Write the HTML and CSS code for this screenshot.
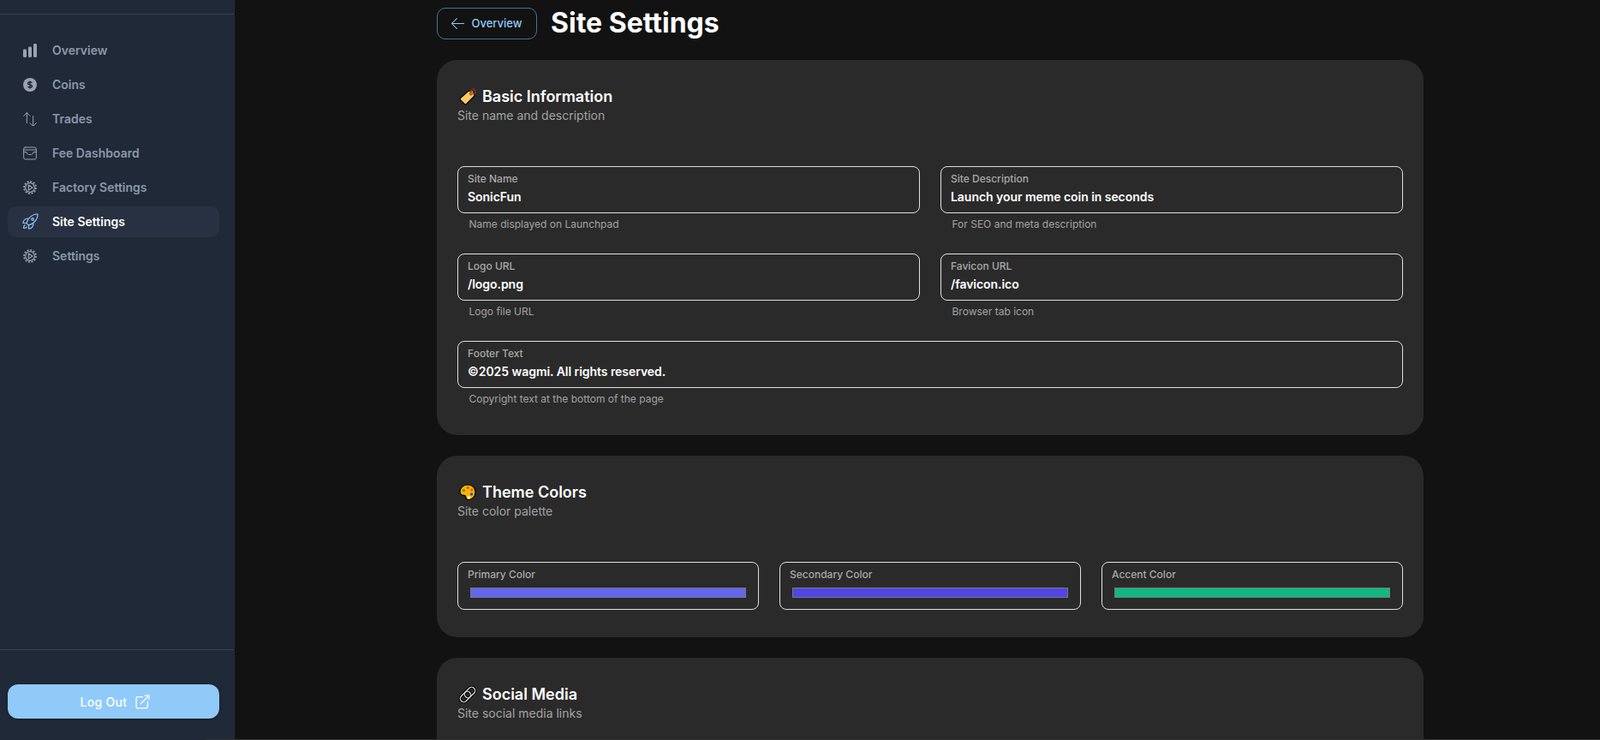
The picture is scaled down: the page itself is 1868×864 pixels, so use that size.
FILE: index.html
```html
<!DOCTYPE html>
<html lang="en">
<head>
    <meta charset="UTF-8">
    <meta name="viewport" content="width=device-width, initial-scale=1.0">
    <title>Site Settings</title>
    <link rel="stylesheet" href="styles.css">
</head>
<body>
    <aside class="sidebar">
        <div class="sidebar-top"></div>
        <nav class="nav">
            <a class="nav-item" href="#">
                <svg class="nav-icon" viewBox="0 0 16 16" fill="currentColor"><rect x="0" y="6.5" width="4" height="9.5" rx="1.4"/><rect x="6" y="3.5" width="4" height="12.5" rx="1.4"/><rect x="12" y="0" width="4" height="16" rx="1.4"/></svg>
                Overview
            </a>
            <a class="nav-item" href="#">
                <svg class="nav-icon" viewBox="0 0 16 16"><circle cx="8" cy="8" r="8" fill="currentColor"/><path d="M10.4 5.7C10 5 9 4.7 8 4.7c-1.3 0-2.4.6-2.4 1.7 0 2.3 4.9 1 4.9 3.2 0 1.1-1.1 1.7-2.5 1.7-1.1 0-2-.4-2.5-1.1M8 3.4v9.2" fill="none" stroke="#1f2937" stroke-width="1.4"/></svg>
                Coins
            </a>
            <a class="nav-item" href="#">
                <svg class="nav-icon" viewBox="0 0 24 24" fill="none" stroke="currentColor" stroke-width="1.5" stroke-linecap="round" stroke-linejoin="round"><path d="M1 6.5 6.5 1m0 0L12 6.5M6.5 1v18m16.5 0L17.5 24.500m0 0L12 19m5.500 5.500V7"/></svg>
                Trades
            </a>
            <a class="nav-item" href="#">
                <svg class="nav-icon" viewBox="0 0 24 24" fill="none" stroke="currentColor" stroke-width="1.5" stroke-linecap="round" stroke-linejoin="round"><rect x="1" y="1.500" width="22" height="21" rx="3"/><path d="M1 6h22M1 10h5c.500 3 2.500 4.500 6 4.500s5.500-1.500 6-4.500h5"/></svg>
                Fee Dashboard
            </a>
            <a class="nav-item" href="#">
                <svg class="nav-icon" viewBox="0 0 24 24" fill="none" stroke="currentColor" stroke-linejoin="round"><circle cx="12" cy="12" r="10.500" stroke-width="2.600" stroke-dasharray="3 2.500"/><circle cx="12" cy="12" r="8" stroke-width="1.800"/><path d="M9.500 7.500 16.500 12l-7 4.500Z" stroke-width="1.800"/></svg>
                Factory Settings
            </a>
            <a class="nav-item nav-item-active" href="#">
                <svg class="nav-icon nav-icon-rocket" viewBox="0 0 24 24" fill="none" stroke="currentColor" stroke-width="1.3" stroke-linecap="round" stroke-linejoin="round"><path d="M15.59 14.37a6 6 0 0 1-5.84 7.38v-4.8m5.84-2.58a14.98 14.98 0 0 0 6.16-12.12A14.98 14.98 0 0 0 9.631 8.41m5.96 5.96a14.926 14.926 0 0 1-5.841 2.58m-.119-8.54a6 6 0 0 0-7.381 5.84h4.8m2.581-5.84a14.927 14.927 0 0 0-2.58 5.84m2.699 2.7c-.103.021-.207.041-.311.06a15.09 15.09 0 0 1-2.448-2.448 14.9 14.9 0 0 1 .06-.312m-2.24 2.39a4.493 4.493 0 0 0-1.757 4.306 4.493 4.493 0 0 0 4.306-1.758M16.5 9a1.5 1.5 0 1 1-3 0 1.5 1.5 0 0 1 3 0Z"/></svg>
                Site Settings
            </a>
            <a class="nav-item" href="#">
                <svg class="nav-icon" viewBox="0 0 24 24" fill="none" stroke="currentColor" stroke-linejoin="round"><circle cx="12" cy="12" r="10.500" stroke-width="2.600" stroke-dasharray="3 2.500"/><circle cx="12" cy="12" r="8" stroke-width="1.800"/><path d="M9.500 7.500 16.500 12l-7 4.500Z" stroke-width="1.800"/></svg>
                Settings
            </a>
        </nav>
        <div class="sidebar-footer">
            <button class="logout" type="button">
                Log Out
                <svg class="logout-icon" viewBox="0 0 16 16" fill="none" stroke="currentColor" stroke-width="1.200" stroke-linecap="round" stroke-linejoin="round"><path d="M8 2.500H2.500A1.500 1.500 0 0 0 1 4v9.500A1.500 1.500 0 0 0 2.500 15H12a1.500 1.500 0 0 0 1.500-1.500V8M6 10 15 1m0 0h-4.500M15 1v4.500"/></svg>
            </button>
        </div>
    </aside>

    <main class="main">
        <header class="page-head">
            <a class="back-link" href="#">
                <svg class="back-icon" viewBox="0 0 24 24" fill="none" stroke="currentColor" stroke-width="1.300" stroke-linecap="round" stroke-linejoin="round"><path d="M10.500 19.500 3 12m0 0 7.500-7.500M3 12h18"/></svg>
                Overview
            </a>
            <h1>Site Settings</h1>
        </header>

        <section class="card">
            <h2 class="card-title">
                <svg class="emoji" viewBox="0 0 20 20"><path d="M10.500 3.500 16.500 2.500 18 9 8.500 18.500a1.500 1.500 0 0 1-2.100 0L1.500 13.600a1.500 1.500 0 0 1 0-2.100Z" fill="#ffc966" stroke="#000" stroke-width="1.200"/><path d="M14 6.500C13.500 3 15 .8 17 1.200c1.800.400 2.300 3 1 6" fill="none" stroke="#a8311c" stroke-width="1.300"/><circle cx="14" cy="6.300" r="1.800" fill="#d9730d" stroke="#7a3a10" stroke-width=".8"/></svg>
                Basic Information
            </h2>
            <p class="card-sub">Site name and description</p>
            <div class="grid grid-2">
                <div>
                    <label class="field">
                        <span class="field-label">Site Name</span>
                        <input class="field-input" type="text" value="SonicFun">
                    </label>
                    <p class="helper">Name displayed on Launchpad</p>
                </div>
                <div>
                    <label class="field">
                        <span class="field-label">Site Description</span>
                        <input class="field-input" type="text" value="Launch your meme coin in seconds">
                    </label>
                    <p class="helper">For SEO and meta description</p>
                </div>
                <div>
                    <label class="field">
                        <span class="field-label">Logo URL</span>
                        <input class="field-input" type="text" value="/logo.png">
                    </label>
                    <p class="helper">Logo file URL</p>
                </div>
                <div>
                    <label class="field">
                        <span class="field-label">Favicon URL</span>
                        <input class="field-input" type="text" value="/favicon.ico">
                    </label>
                    <p class="helper">Browser tab icon</p>
                </div>
                <div class="span-2">
                    <label class="field">
                        <span class="field-label">Footer Text</span>
                        <input class="field-input" type="text" value="©2025 wagmi. All rights reserved.">
                    </label>
                    <p class="helper">Copyright text at the bottom of the page</p>
                </div>
            </div>
        </section>

        <section class="card">
            <h2 class="card-title">
                <svg class="emoji" viewBox="0 0 20 20"><path d="M10 1C4.800 1 1 4.600 1 9c0 3 2.200 4.500 4.300 4.300 1.500-.100 2.400.500 2.400 1.800 0 1.700 1 3.400 3.300 3.400 4.600 0 8-4 8-9S15.200 1 10 1Z" fill="#ffb300" stroke="#000" stroke-width="1.200"/><circle cx="5.500" cy="7.500" r="1.600" fill="#3c9a2e"/><circle cx="10.200" cy="4.500" r="1.500" fill="#e2492b"/><circle cx="14.800" cy="7" r="1.400" fill="#e2492b"/><circle cx="14.500" cy="12" r="1.800" fill="#1c5fd6"/><circle cx="11.500" cy="15.800" r="1.500" fill="#fff"/></svg>
                Theme Colors
            </h2>
            <p class="card-sub">Site color palette</p>
            <div class="grid grid-3">
                <label class="field">
                    <span class="field-label">Primary Color</span>
                    <input class="color-input" type="color" value="#6366f1">
                </label>
                <label class="field">
                    <span class="field-label">Secondary Color</span>
                    <input class="color-input" type="color" value="#4f46e5">
                </label>
                <label class="field">
                    <span class="field-label">Accent Color</span>
                    <input class="color-input" type="color" value="#10b981">
                </label>
            </div>
        </section>

        <section class="card">
            <h2 class="card-title">
                <svg class="emoji" viewBox="0 0 20 20" fill="none"><g stroke="#000" stroke-width="3.400"><rect x="3.500" y="5.500" width="8" height="14" rx="4" transform="rotate(45 7.500 12.500)"/><rect x="8.500" y=".5" width="8" height="14" rx="4" transform="rotate(45 12.500 7.500)"/></g><g stroke="#d8d8d8" stroke-width="1.300"><rect x="3.500" y="5.500" width="8" height="14" rx="4" transform="rotate(45 7.500 12.500)"/><rect x="8.500" y=".5" width="8" height="14" rx="4" transform="rotate(45 12.500 7.500)"/></g></svg>
                Social Media
            </h2>
            <p class="card-sub">Site social media links</p>
        </section>
    </main>
    <div class="page-edge"></div>
</body>
</html>
```

FILE: styles.css
```css
* {
    box-sizing: border-box;
}
html, body {
    height: 100%;
}
body {
    margin: 0;
    display: flex;
    height: 864px;
    overflow: hidden;
    font-family: Inter, "Noto Sans", sans-serif;
    background-color: #121212;
    color: white;
}

/* sidebar */
.sidebar {
    width: 274px;
    flex-shrink: 0;
    display: flex;
    flex-direction: column;
    background: #1f2937;
    border-right: 1px solid #2b2b2b;
}
.sidebar-top {
    height: 17px;
    border-bottom: 1px solid #374151;
}
.nav {
    flex: 1;
    display: flex;
    flex-direction: column;
    gap: 4px;
    padding: 24px 17px 0 9px;
}
.nav-item {
    display: flex;
    align-items: center;
    gap: 18px;
    height: 36px;
    padding: 0 0 1px 18px;
    border-radius: 10px;
    font-size: 14px;
    font-weight: 600;
    color: #8b98a9;
    text-decoration: none;
}
.nav-icon {
    width: 16px;
    height: 16px;
    flex-shrink: 0;
    color: #9ca3af;
}
.nav-item-active {
    background: #283141;
    color: white;
}
.nav-item-active .nav-icon {
    color: #90caf9;
}
.nav-icon-rocket {
    width: 21px;
    height: 21px;
    margin: 0 -2.5px;
}
.sidebar-footer {
    height: 106px;
    padding: 40px 17px 0 9px;
    border-top: 1px solid #374151;
}
.logout {
    display: flex;
    align-items: center;
    justify-content: center;
    gap: 10px;
    width: 100%;
    height: 40px;
    padding-left: 10px;
    border: none;
    border-radius: 12px;
    background: #90caf9;
    box-shadow: 0 1px 3px rgba(0,0,0,0.3);
    color: white;
    font-family: inherit;
    font-size: 14px;
    font-weight: 500;
    letter-spacing: 0.3px;
}
.logout-icon {
    width: 17px;
    height: 17px;
}

/* main column */
.main {
    flex: 1;
    min-width: 0;
    padding: 9px 0 0 236px;
}
.page-head {
    display: flex;
    align-items: center;
    gap: 16px;
    height: 37px;
    margin-bottom: 24px;
}
.page-head h1 {
    margin: 0 0 2px;
    font-size: 32px;
    line-height: 36px;
    font-weight: 700;
}
.back-link {
    display: flex;
    align-items: center;
    gap: 7px;
    width: 117px;
    height: 37px;
    padding: 0 0 1px 13.5px;
    border: 1px solid #4a7290;
    border-radius: 10px;
    color: #90caf9;
    font-size: 13px;
    font-weight: 500;
    text-decoration: none;
}
.back-icon {
    width: 19px;
    height: 19px;
}
.card {
    width: 1152px;
    margin-bottom: 24px;
    padding: 29px 24px 32px;
    background: #2a2a2a;
    border-radius: 24px;
}
.card-title {
    display: flex;
    align-items: center;
    gap: 7px;
    margin: 0;
    font-size: 18px;
    line-height: 28px;
    font-weight: 600;
}
.emoji {
    width: 20px;
    height: 20px;
    margin-left: 2px;
}
.card-sub {
    margin: -2px 0 49px;
    font-size: 14px;
    line-height: 20px;
    color: #a3a3a3;
}
.grid {
    display: grid;
    gap: 24px;
}
.grid-2 {
    grid-template-columns: 1fr 1fr;
}
.grid-3 {
    grid-template-columns: 1fr 1fr 1fr;
}
.span-2 {
    grid-column: span 2;
}

/* fields */
.field {
    display: block;
    padding: 6px 11px 0;
    border: 1px solid #e0e0e0;
    border-radius: 8px;
}
.field-label {
    display: block;
    font-size: 12px;
    line-height: 16px;
    font-weight: 500;
    color: #a9a9a9;
}
.field-input {
    display: block;
    width: 100%;
    height: 20px;
    margin: 2px 0 9px;
    padding: 0;
    border: none;
    outline: none;
    background: transparent;
    color: white;
    font-family: inherit;
    font-size: 14px;
    font-weight: 600;
    letter-spacing: -0.05px;
}
.color-input {
    display: block;
    width: calc(100% - 6px);
    height: 12px;
    margin: 7px 3px 13px;
    padding: 0;
    border: none;
    background: transparent;
}
.color-input::-webkit-color-swatch-wrapper {
    padding: 0;
}
.helper {
    margin: 4px 0 1px 13.5px;
    font-size: 12px;
    line-height: 18px;
    color: #a3a3a3;
}

/* thin line along the bottom of the window */
.page-edge {
    position: fixed;
    left: 239px;
    right: 0;
    bottom: 0;
    height: 1px;
    background: #333;
}
```
